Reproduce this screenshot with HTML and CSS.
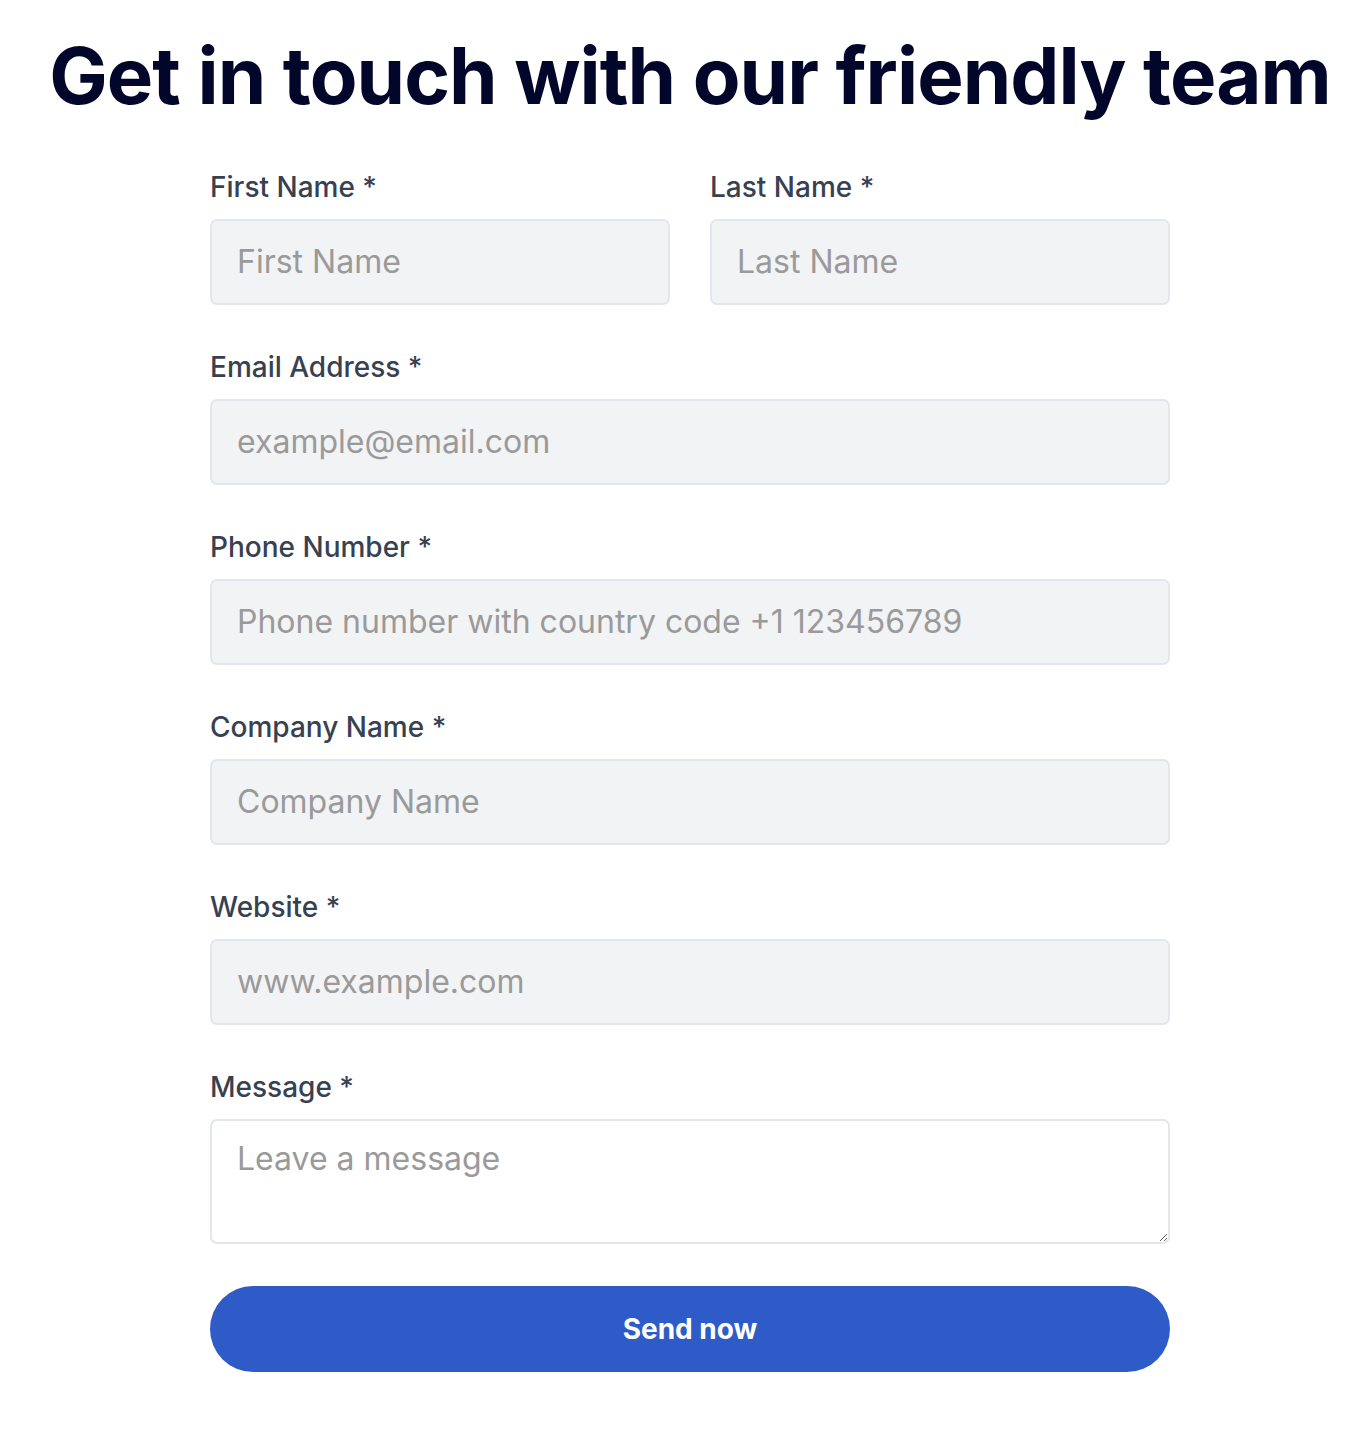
FILE: index.html
```html
<!DOCTYPE html>
<html lang="en">
<head>
<meta charset="utf-8">
<title>Contact</title>
<link rel="stylesheet" href="styles.css">
</head>
<body>
<main class="page">
  <h1 class="title">Get in touch with our friendly team</h1>
  <form class="form">
    <div class="row two">
      <div class="field">
        <label class="label" for="fn">First Name *</label>
        <input class="input" id="fn" type="text" placeholder="First Name">
      </div>
      <div class="field">
        <label class="label" for="ln">Last Name *</label>
        <input class="input" id="ln" type="text" placeholder="Last Name">
      </div>
    </div>
    <div class="field">
      <label class="label" for="em">Email Address *</label>
      <input class="input" id="em" type="email" placeholder="example@email.com">
    </div>
    <div class="field">
      <label class="label" for="ph">Phone Number *</label>
      <input class="input" id="ph" type="tel" placeholder="Phone number with country code +1 123456789">
    </div>
    <div class="field">
      <label class="label" for="co">Company Name *</label>
      <input class="input" id="co" type="text" placeholder="Company Name">
    </div>
    <div class="field">
      <label class="label" for="ws">Website *</label>
      <input class="input" id="ws" type="text" placeholder="www.example.com">
    </div>
    <div class="field">
      <label class="label" for="ms">Message *</label>
      <textarea class="textarea" id="ms" placeholder="Leave a message"></textarea>
    </div>
    <button class="button" type="button">Send now</button>
  </form>
</main>
</body>
</html>
```
FILE: styles.css
```css
* { box-sizing: border-box; }
html, body { margin: 0; padding: 0; background: #ffffff; }
body { font-family: Inter, "Noto Sans", sans-serif; }

.page {
  display: flex;
  flex-direction: column;
  align-items: center;
  padding: 29px 0 0 20px;
}

.title {
  margin: 0;
  font-size: 78px;
  line-height: 1.2;
  font-weight: 700;
  color: #03062b;
  letter-spacing: -0.95px;
  text-align: center;
  white-space: nowrap;
}

.form {
  width: 960px;
  margin-top: 46px;
  display: flex;
  flex-direction: column;
  gap: 44px;
}

.row.two {
  display: grid;
  grid-template-columns: 1fr 1fr;
  gap: 40px;
}

.field {
  display: flex;
  flex-direction: column;
}

.label {
  font-size: 28px;
  line-height: 36px;
  font-weight: 500;
  color: #374151;
  margin-bottom: 14px;
}

.input, .textarea {
  font-family: Inter, "Noto Sans", sans-serif;
  font-size: 32px;
  color: #111827;
  border: 2px solid #e3e6ef;
  border-radius: 7px;
  outline: none;
  width: 100%;
}

.input {
  height: 86px;
  padding: 0 25px;
  background: #f2f3f5;
}

.textarea {
  height: 125px;
  padding: 14px 25px;
  line-height: 1.5;
  background: #ffffff;
  resize: vertical;
  display: block;
}

.input::placeholder, .textarea::placeholder {
  color: #9a9a9a;
  opacity: 1;
}

.button {
  margin-top: -2px;
  height: 86px;
  width: 100%;
  border: none;
  border-radius: 43px;
  background: #2e5bc8;
  color: #ffffff;
  font-family: Inter, "Noto Sans", sans-serif;
  font-size: 28px;
  font-weight: 700;
  cursor: pointer;
}
```
